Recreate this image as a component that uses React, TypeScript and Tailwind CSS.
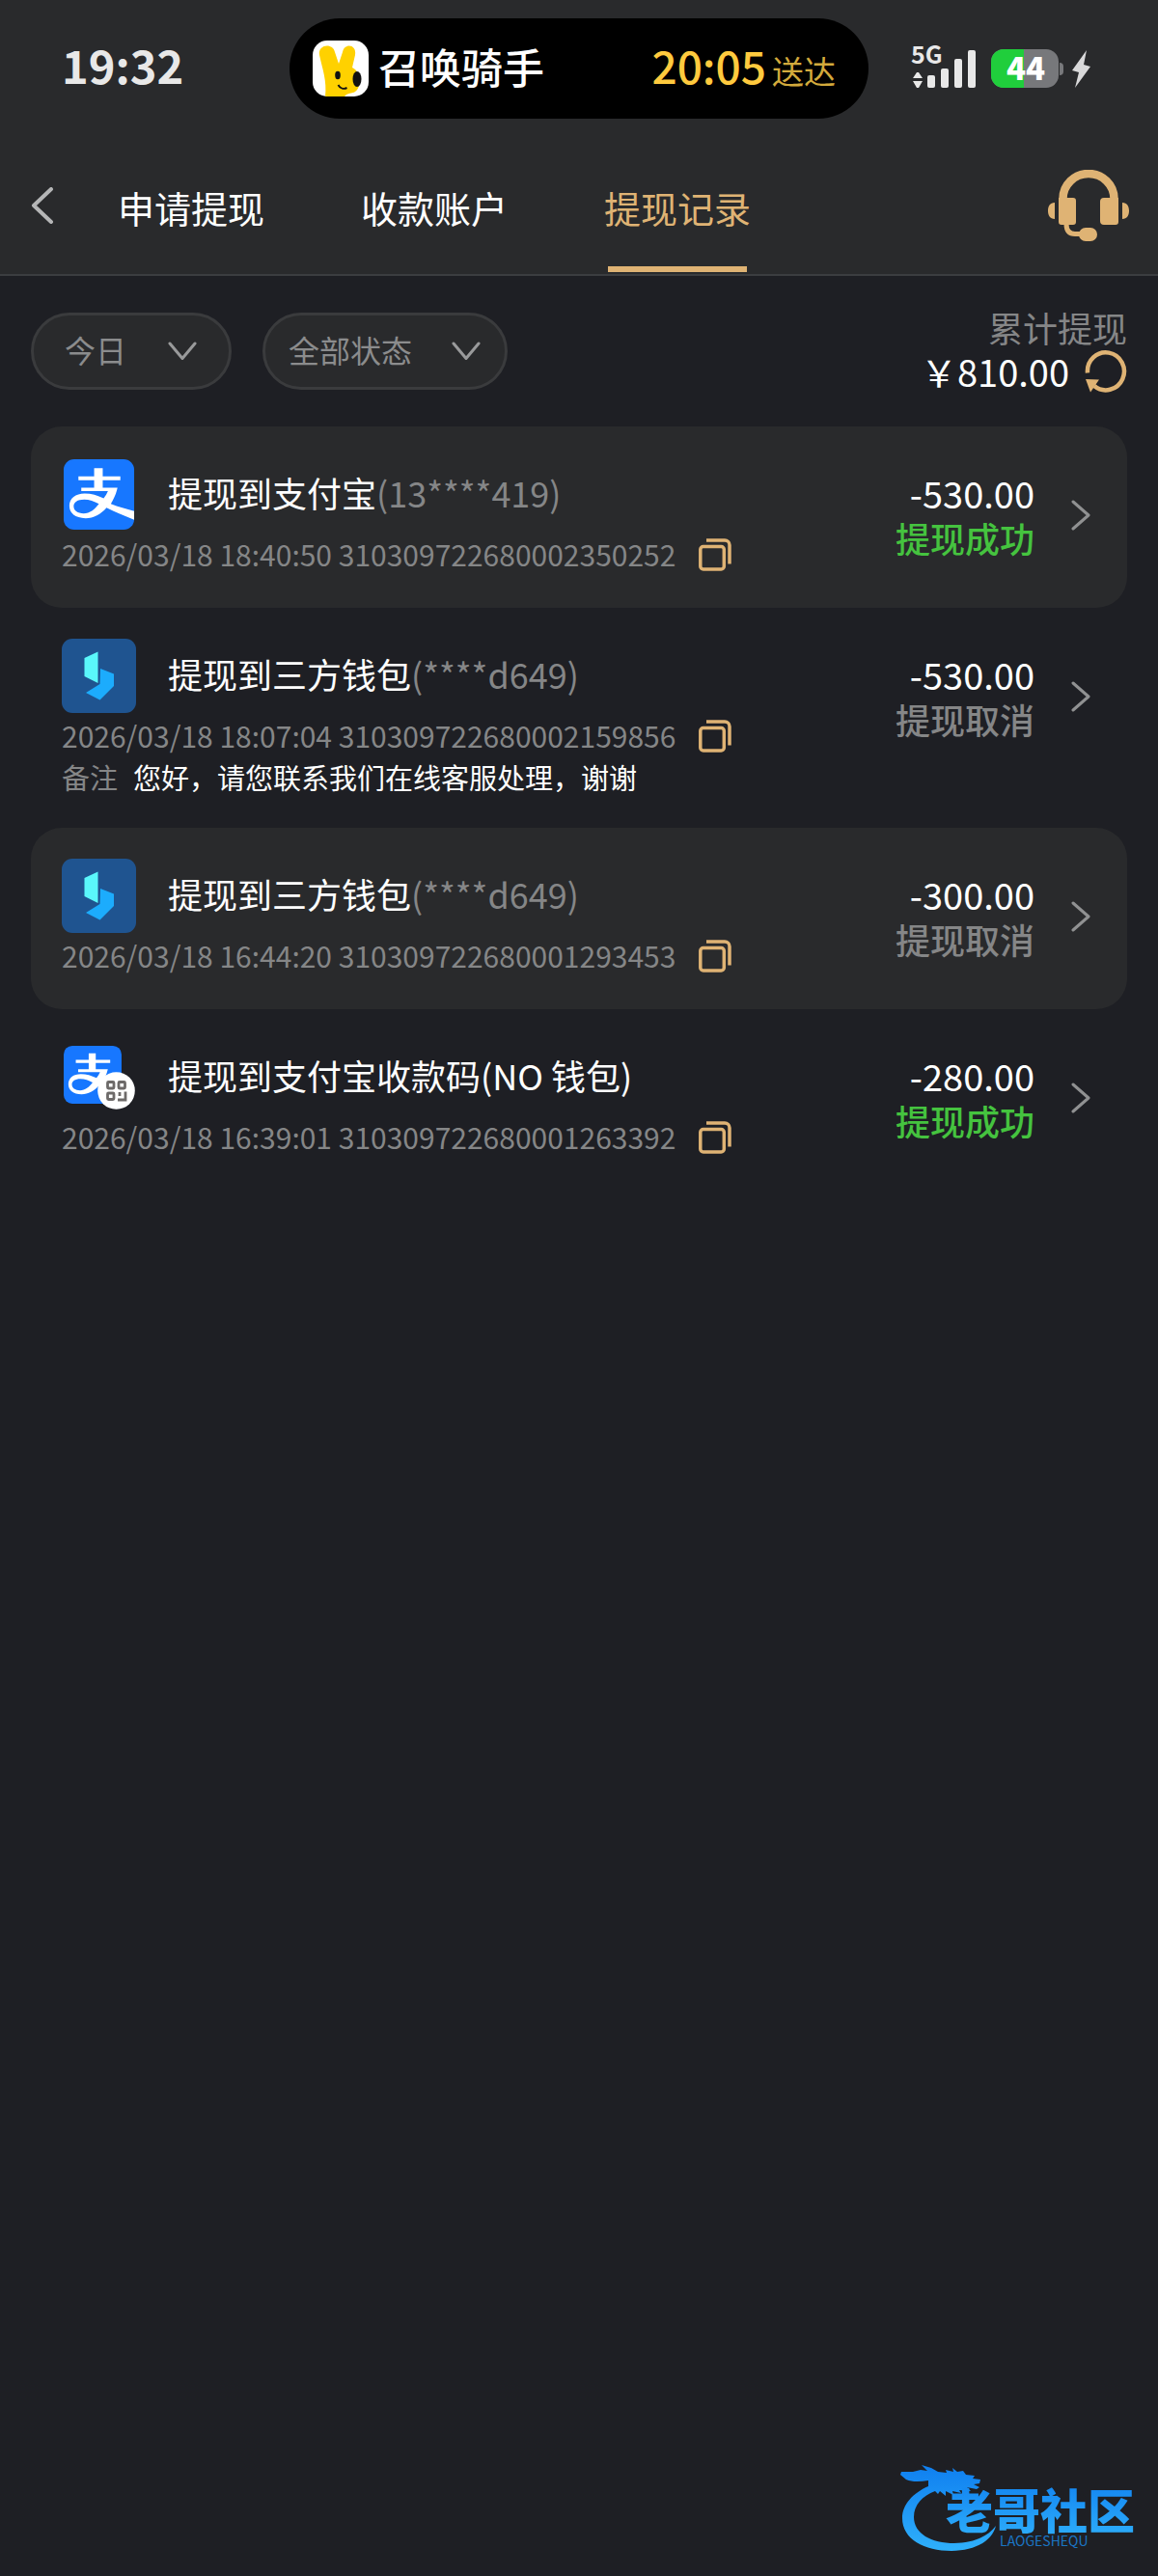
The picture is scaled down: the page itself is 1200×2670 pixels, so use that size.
import React from "react";

const GOLD = "#dfb374";

type RecordItem = {
  icon: "alipay" | "wallet" | "alipayCode";
  title: string;
  account?: string;
  time: string;
  order: string;
  remark?: string;
  amount: string;
  ok: boolean;
};

const RECORDS: RecordItem[] = [
  { icon: "alipay", title: "提现到支付宝", account: "(13****419)", time: "2026/03/18 18:40:50", order: "310309722680002350252", amount: "-530.00", ok: true },
  { icon: "wallet", title: "提现到三方钱包", account: "(****d649)", time: "2026/03/18 18:07:04", order: "310309722680002159856", remark: "您好，请您联系我们在线客服处理，谢谢", amount: "-530.00", ok: false },
  { icon: "wallet", title: "提现到三方钱包", account: "(****d649)", time: "2026/03/18 16:44:20", order: "310309722680001293453", amount: "-300.00", ok: false },
  { icon: "alipayCode", title: "提现到支付宝收款码(NO 钱包)", time: "2026/03/18 16:39:01", order: "310309722680001263392", amount: "-280.00", ok: true },
];

function AlipayMark() {
  return (
    <>
      <rect width="74" height="74" rx="11" fill="#1777ff" />
      <path
        d="M32 9.500h9v8.500h18.500v4H41v8h15.500c-1.500 6.500-4 12-7 17 8 3 16 5.500 24.500 7.500v9c-11-4-20-8-29-12.500-6 7-13.500 11-22 11C12 62 6 56.500 6 49c0-8 6.500-13 16-13 7 0 13.500 2 20 5 2-2.500 3.500-5 4.500-7.500H18.500v-3.500H32v-8H15.500v-4H32z M37 47c-5-3-10-4.800-15.500-4.800-7 0-11 2.800-11 7.300 0 4.500 4 7.500 10.500 7.500 6.500 0 11.500-4 16-10z"
        fill="#fff"
        fillRule="evenodd"
      />
    </>
  );
}

function RecordIcon({ kind }: { kind: RecordItem["icon"] }) {
  if (kind === "wallet") {
    return (
      <svg viewBox="0 0 77 77" className="size-[77px] shrink-0" aria-hidden="true">
        <rect width="77" height="77" rx="11" fill="#1f5490" />
        <path d="M40 31 L54 36.500 V49 L39.500 63.500 L25 56 L39.500 47 Z" fill="#1cacfd" />
        <path d="M37.500 13.500 V46 L23.500 39 V20 Z" fill="#5af7fb" />
      </svg>
    );
  }
  if (kind === "alipay") {
    return (
      <svg viewBox="-2 -2 78 78" className="size-[77px] shrink-0" aria-hidden="true">
        <AlipayMark />
      </svg>
    );
  }
  return (
    <svg viewBox="0 0 77 77" className="size-[77px] shrink-0" aria-hidden="true">
      <g transform="translate(2 6) scale(0.81)">
        <AlipayMark />
      </g>
      <circle cx="56.500" cy="52.500" r="19.300" fill="#fff" />
      <g fill="none" stroke="#6d6a69" strokeWidth="2.800">
        <rect x="47.500" y="43.500" width="6.500" height="6.500" rx="1" />
        <rect x="59" y="43.500" width="6.500" height="6.500" rx="1" />
        <rect x="47.500" y="55" width="6.500" height="6.500" rx="1" />
        <path d="M60 54v4M66 53.500v8.500h-8" />
      </g>
    </svg>
  );
}

function CopyIcon() {
  return (
    <svg viewBox="0 0 34 34" className="size-[34px]" fill="none" stroke={GOLD} strokeWidth="3.500" aria-hidden="true">
      <rect x="1.800" y="8.500" width="24.500" height="23.500" rx="3" />
      <path d="M8 2h19a5 5 0 0 1 5 5v19.500" />
    </svg>
  );
}

function Filter({ label, options, className, arrow }: { label: string; options: string[]; className: string; arrow: string }) {
  return (
    <div className="relative">
      <select
        aria-label={label}
        className={"h-20 appearance-none rounded-full border-[3px] border-[#3a3b3d] bg-[#292a2c] pb-1 text-[32px] text-[#8b8c8d] outline-none " + className}
      >
        {options.map((o) => (
          <option key={o}>{o}</option>
        ))}
      </select>
      <svg viewBox="0 0 30 20" className={"pointer-events-none absolute top-[30px] h-5 w-[30px] " + arrow} fill="none" stroke="#999a9b" strokeWidth="3" strokeLinecap="round" strokeLinejoin="round" aria-hidden="true">
        <path d="M2 2l13 15.500L28 2" />
      </svg>
    </div>
  );
}

function StatusBar() {
  return (
    <div className="grid h-[142px] grid-cols-[1fr_600px_1fr] items-center">
      <div className="pb-2 pl-16 text-[47px] font-bold leading-[64px] text-[#e8e8e8]">19:32</div>
      <div className="flex h-[104px] items-center rounded-full bg-black pl-6 pr-[34px]">
        <svg viewBox="0 0 58 58" className="size-[58px] shrink-0" aria-hidden="true">
          <defs>
            <clipPath id="appClip">
              <rect width="58" height="58" rx="15" />
            </clipPath>
          </defs>
          <g clipPath="url(#appClip)">
            <rect width="58" height="58" fill="#fff" />
            <path d="M7 15C5 4 21 2 23 12l4 12 4-12C33 2 46 4 44 15l-3 13c9 4 10 20 3 25-3 2-8 1-11 5H13C15 42 10 29 7 15z" fill="#ffd100" />
            <ellipse cx="26" cy="36" rx="2.800" ry="4.200" fill="#111" />
            <ellipse cx="46" cy="40" rx="4.500" ry="8" fill="#111" />
            <path d="M26.500 46c2 4 6 4.500 9 3" fill="none" stroke="#111" strokeWidth="2" />
          </g>
        </svg>
        <span className="pb-1.5 pl-2.5 text-[43px] font-medium leading-[64px] text-white">召唤骑手</span>
        <span className="ml-auto flex items-baseline gap-1.5 pb-2 text-[#ffca3e]">
          <span className="text-[46px] font-medium leading-[64px]">20:05</span>
          <span className="text-[33px] leading-[48px] text-[#d3aa3c]">送达</span>
        </span>
      </div>
      <div className="pb-1.5 pl-11">
        <svg viewBox="0 0 188 46" className="h-[46px] w-[188px] overflow-visible" role="img" aria-label="5G 44%">
          <text x="0" y="21" fontSize="25" fontWeight="700" fill="#e8e8e8">5G</text>
          <g fill="#e8e8e8">
            <path d="M2 36l4-6h2l4 6zM2 39h10l-4 7H6z" />
            <rect x="17" y="33" width="8" height="13" rx="2" />
            <rect x="31" y="26" width="8" height="20" rx="2" />
            <rect x="45" y="16" width="8" height="30" rx="2" />
            <rect x="59" y="7" width="8" height="39" rx="2" />
          </g>
          <rect x="83" y="6" width="70" height="40" rx="13" fill="#77787b" />
          <path d="M96 6h21v40H96a13 13 0 0 1-13-13V19A13 13 0 0 1 96 6z" fill="#20ce3c" />
          <path d="M154 20a4 4 0 0 1 4 4v5a4 4 0 0 1-4 4z" fill="#77787b" />
          <text x="119" y="38" fontSize="33" fontWeight="800" fill="#fff" textAnchor="middle">44</text>
          <path d="M182 7l-15 21 7 2-4 16 16-22-7-2z" fill="#d9d9da" />
        </svg>
      </div>
    </div>
  );
}

export default function App() {
  const tabs = ["申请提现", "收款账户", "提现记录"];
  return (
    <div className="relative flex min-h-screen flex-col bg-[#1e1f24] font-['Noto_Sans_CJK_SC','Noto_Sans',sans-serif] text-white">
      <header className="border-b-2 border-[#3b3d40] bg-[#292a2c]">
        <StatusBar />
        <nav className="flex h-[142px] items-stretch pl-8 pr-[30px]">
          <button aria-label="返回" className="flex w-10 items-center">
            <svg viewBox="0 0 24 38" className="h-[38px] w-6" fill="none" stroke="#b5b6b7" strokeWidth="4" strokeLinecap="round" strokeLinejoin="round" aria-hidden="true">
              <path d="M21 2L3 19l18 17" />
            </svg>
          </button>
          {tabs.map((t, i) => (
            <button key={t} className={"relative w-[252px] pt-0.5 text-[38px] " + (i === 2 ? "text-[#dfb374]" : "text-white")}>
              {t}
              {i === 2 && <span className="absolute bottom-0.5 left-1/2 h-1.5 w-36 -translate-x-1/2 bg-[#dfb374]" />}
            </button>
          ))}
          <button aria-label="在线客服" className="ml-auto flex items-center">
            <svg viewBox="0 0 84 74" className="h-[74px] w-[84px]" aria-hidden="true">
              <path d="M15.500 32v-2a26.500 26 0 0 1 53 0v2" fill="none" stroke={GOLD} strokeWidth="8.500" />
              <path d="M11 29h15a3 3 0 0 1 3 3v22a3 3 0 0 1-3 3H14a3 3 0 0 1-3-3zM73 29H58a4 4 0 0 0-4 4v20a4 4 0 0 0 4 4h12a3 3 0 0 0 3-3zM7 34v17C2 51 0 47 0 42.500S2 34 7 34zM77 34v17c5 0 7-4 7-8.500S82 34 77 34z" fill={GOLD} />
              <path d="M19 56c0 8 4 10.500 9 10.500h8" fill="none" stroke={GOLD} strokeWidth="5" />
              <rect x="32" y="60" width="19" height="14" rx="7" fill={GOLD} />
            </svg>
          </button>
        </nav>
      </header>

      <main className="px-8">
        <section className="flex items-start justify-between py-[38px]">
          <div className="flex gap-8">
            <Filter label="日期" options={["今日", "昨日"]} className="w-[208px] pl-8" arrow="right-9" />
            <Filter label="状态" options={["全部状态", "提现成功", "提现取消"]} className="w-[254px] pl-6" arrow="right-7" />
          </div>
          <div className="-my-2 flex flex-col items-end">
            <div className="text-[36px] leading-[46px] text-[#858687]">累计提现</div>
            <div className="flex items-center gap-4 text-[38px] leading-[46px]">
              <span>￥810.00</span>
              <button aria-label="刷新">
                <svg viewBox="0 0 44 44" className="size-11" aria-hidden="true">
                  <path d="M3 23.500A19 19.500 0 1 1 10 37" fill="none" stroke={GOLD} strokeWidth="4.500" />
                  <path d="M1 30l14 .5-9 13z" fill={GOLD} />
                </svg>
              </button>
            </div>
          </div>
        </section>

        <ul>
          {RECORDS.map((r, i) => (
            <li key={r.order} className={"flex items-start rounded-[32px] px-8 py-8 " + (i % 2 === 0 ? "bg-[#292a2c]" : "")}>
              <div className="min-w-0 flex-1">
                <div className="flex items-center gap-[33px]">
                  <RecordIcon kind={r.icon} />
                  <h2 className="pb-1.5 text-[36px] leading-[54px]">
                    {r.title}
                    {r.account && <span className="text-[#858687]">{r.account}</span>}
                  </h2>
                </div>
                <div className="flex h-[47px] items-center gap-6 text-[30px] text-[#858687]">
                  <span>{r.time + " " + r.order}</span>
                  <button aria-label="复制订单号">
                    <CopyIcon />
                  </button>
                </div>
                {r.remark && (
                  <p className="flex h-10 items-center gap-4 text-[29px]">
                    <span className="text-[#858687]">备注</span>
                    <span>{r.remark}</span>
                  </p>
                )}
              </div>
              <div className="flex items-center gap-[38px] pr-1.5 pt-3.5">
                <div className="text-right">
                  <div className="text-[38px] leading-[46px]">{r.amount}</div>
                  <div className={"text-[36px] font-medium leading-[46px] " + (r.ok ? "text-[#45c33f]" : "text-[#858687]")}>
                    {r.ok ? "提现成功" : "提现取消"}
                  </div>
                </div>
                <svg viewBox="0 0 20 32" className="h-8 w-5" fill="none" stroke="#909192" strokeWidth="3" strokeLinecap="round" strokeLinejoin="round" aria-hidden="true">
                  <path d="M2 2l16 14L2 30" />
                </svg>
              </div>
            </li>
          ))}
        </ul>
      </main>

      <div className="absolute bottom-5 right-4">
        <svg viewBox="0 0 252 90" className="h-[90px] w-[252px] overflow-visible" role="img" aria-label="老哥社区 LAOGESHEQU">
          <defs>
            <linearGradient id="wm" x1="0" y1="0" x2="0" y2="1">
              <stop offset="0" stopColor="#0f7ff0" />
              <stop offset="1" stopColor="#2fb0fb" />
            </linearGradient>
          </defs>
          <path d="M30 17C14 24 3 36 3 50c0 22 23 34 51 34 24 0 42-10 46-26-9 12-25 18-43 18-24 0-42-10-42-27 0-13 9-22 22-27l3 3 2-3 6 5v-5l8 4-1-4 9 2-2-3 12 1-4-4 10 2 3-2-6-3 6-1 1-4-8-1 2-3-9-1-3-4-6 1-5-4 1 4-8-2 1 3-9-1-7-4-10-3 6 6-7-1-8 2-12 0L1 5l6 5c7 3 15 2 23 1z" fill="url(#wm)" />
          <text x="48" y="61" fontSize="49" fontWeight="900" fill="url(#wm)">老哥社区</text>
          <text x="104" y="79" fontSize="14" fill="#1b75c4">LAOGESHEQU</text>
        </svg>
      </div>
    </div>
  );
}
